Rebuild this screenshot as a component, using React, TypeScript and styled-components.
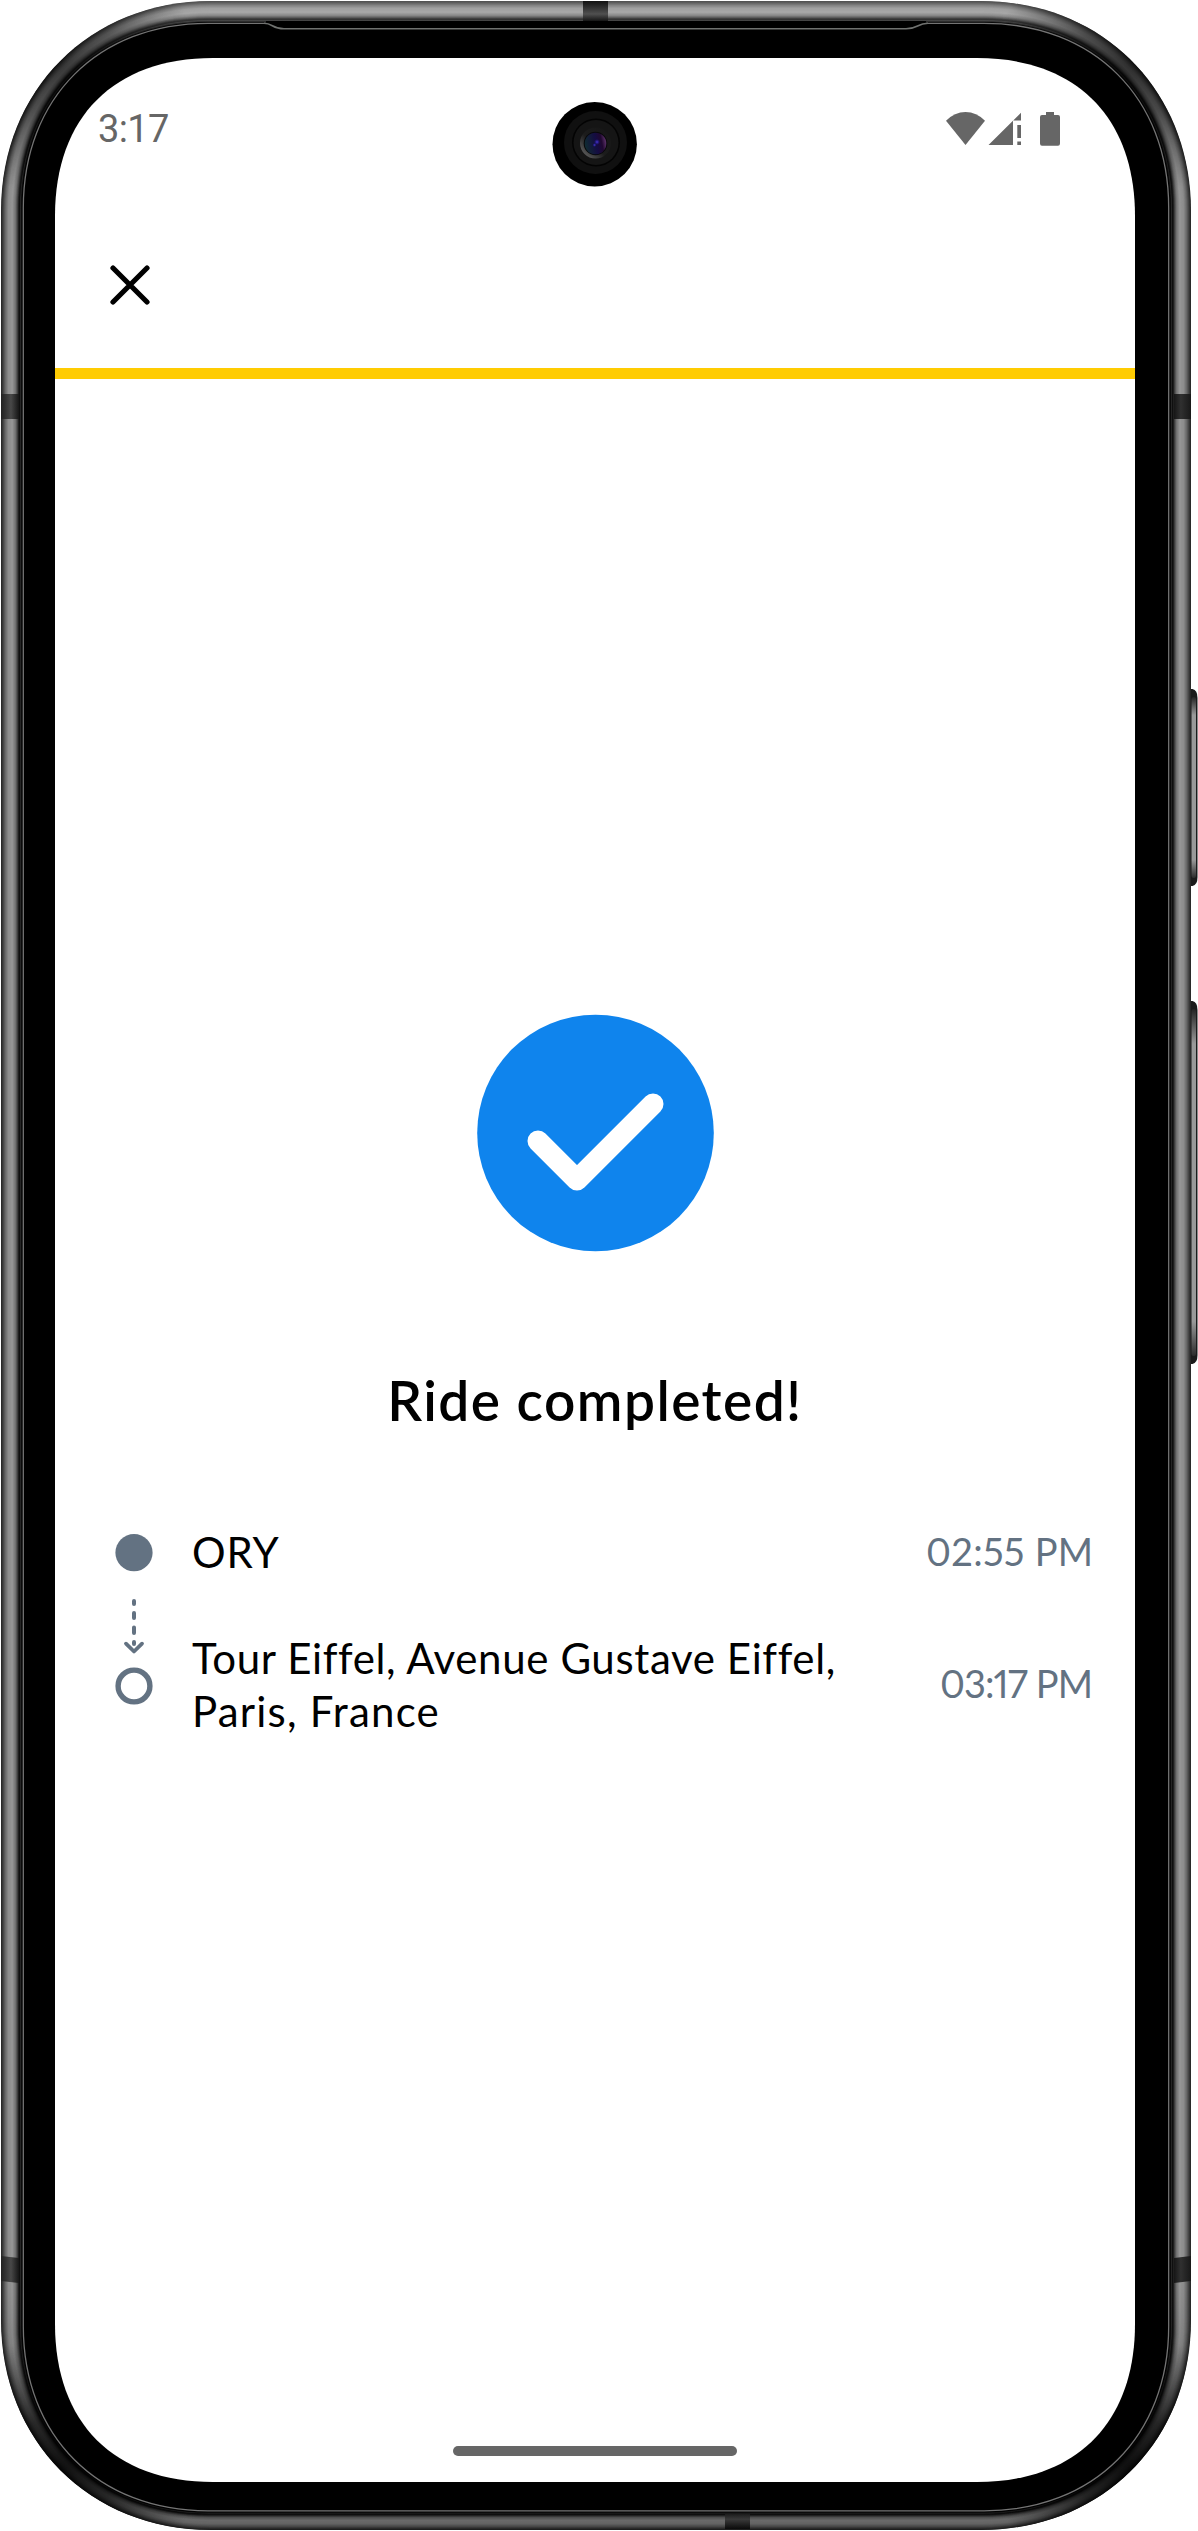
import React from "react";
import styled, { createGlobalStyle } from "styled-components";

const GlobalStyle = createGlobalStyle`
  * { box-sizing: border-box; }
  html, body { margin: 0; padding: 0; background: #fff; }
  body { overflow: hidden; }
`;

const Device = styled.main`
  position: relative;
  width: 1198px;
  height: 2531px;
  padding: 58px 63px 49px 55px;
  overflow: hidden;
  background: #fff;
`;

const Frame = styled.svg`
  position: absolute;
  inset: 0;
  pointer-events: none;
`;

const Screen = styled.section`
  display: flex;
  flex-direction: column;
  width: 1080px;
  height: 2424px;
  background: #fff;
`;

const StatusBar = styled.header`
  display: flex;
  justify-content: space-between;
  height: 140px;
  padding: 49px 75px 0 43px;
`;

const Clock = styled.time`
  font: 400 38px/44px Roboto, sans-serif;
  letter-spacing: -0.6px;
  color: #666;
`;

const StatusIcons = styled.svg`
  display: block;
  margin-top: 4px;
`;

const Toolbar = styled.nav`
  display: flex;
  height: 170px;
  padding: 67px 0 0 55px;
`;

const CloseButton = styled.button`
  display: block;
  width: 40px;
  height: 40px;
  padding: 0;
  border: 0;
  background: none;
  svg { display: block; }
`;

const Progress = styled.div`
  flex: none;
  height: 10.5px;
  background: #ffcc02;
`;

const Content = styled.div`
  display: flex;
  flex: 1;
  flex-direction: column;
  align-items: center;
  padding-top: 635px;
`;

const Badge = styled.svg`
  display: block;
  flex: none;
`;

const Title = styled.h1`
  margin: 113px 0 0;
  font: 600 55px/70px Lato, sans-serif;
  letter-spacing: 1.45px;
  white-space: nowrap;
  color: #000;
`;

const Route = styled.div`
  display: grid;
  grid-template-columns: 38px 1fr auto;
  column-gap: 39px;
  width: 100%;
  margin-top: 91px;
  padding: 0 42px 0 60px;
`;

const RouteTrack = styled.svg`
  display: block;
  grid-row: 1 / span 2;
  margin-top: 1px;
`;

const Place = styled.div<{ $tall?: boolean }>`
  grid-column: 2;
  height: ${(p) => (p.$tall ? 106 : 53)}px;
  margin-top: ${(p) => (p.$tall ? 53 : 0)}px;
  font: 400 42px/53px Lato, sans-serif;
  color: #000;
`;

const Line = styled.span<{ $spacing: number }>`
  display: block;
  white-space: nowrap;
  letter-spacing: ${(p) => p.$spacing}px;
`;

const Time = styled.time<{ $last?: boolean; $spacing: number }>`
  grid-column: 3;
  justify-self: end;
  margin-top: ${(p) => (p.$last ? 78 : -1)}px;
  font: 400 38px/53px Lato, sans-serif;
  font-variant-numeric: proportional-nums;
  letter-spacing: ${(p) => p.$spacing}px;
  margin-right: ${(p) => -p.$spacing}px;
  color: #637282;
  white-space: nowrap;
`;

const HomeBar = styled.div`
  flex: none;
  align-self: center;
  width: 284px;
  height: 10px;
  margin-bottom: 26px;
  border-radius: 5px;
  background: #666;
`;

/* A rounded outline with softened corners: e is the corner extent, c the handle offset. */
function outline(l: number, t: number, r: number, b: number, e: number, c: number) {
  return `M${l} ${t + e}C${l} ${t + c} ${l + c} ${t} ${l + e} ${t}H${r - e}C${r - c} ${t} ${r} ${t + c} ${r} ${t + e}V${b - e}C${r} ${b - c} ${r - c} ${b} ${r - e} ${b}H${l + e}C${l + c} ${b} ${l} ${b - c} ${l} ${b - e}Z`;
}

function ringPath(d: number) {
  return outline(1 + d, 1 + d, 1191 - d, 2530 - d * 0.86, 210 - d * 1.14, 89 - d * 0.64);
}

const PROFILE: [number, number][] = [
  [0, 38], [1.5, 58], [4, 102], [7, 140], [11, 150], [14, 118], [16, 70], [17.5, 24], [18.5, 12], [19.2, 50], [20, 14], [21, 0],
];

function tone(d: number) {
  for (let i = 1; i < PROFILE.length; i++) {
    const [d1, v1] = PROFILE[i];
    const [d0, v0] = PROFILE[i - 1];
    if (d <= d1) return Math.round(v0 + ((v1 - v0) * (d - d0)) / (d1 - d0));
  }
  return 0;
}

const RINGS = Array.from({ length: 43 }, (_, i) => i * 0.5);
const SCREEN_HOLE = outline(55, 58, 1135, 2482, 158, 59);

const CORNERS = [
  { id: "tl", x: 60, y: 62, o: 0.62 },
  { id: "tr", x: 1132, y: 62, o: 0.68 },
  { id: "bl", x: 60, y: 2470, o: 0.85 },
  { id: "br", x: 1132, y: 2470, o: 0.88 },
];

function SideButton({ y, height }: { y: number; height: number }) {
  return (
    <g>
      <path d={`M1190 ${y}h2.500q5 1 5 9v${height - 18}q0 8-5 9h-2.500z`} fill="#1b1b1b" />
      <rect x="1191.500" y={y + 8} width="4.500" height={height - 16} rx="2" fill="url(#key)" />
    </g>
  );
}

function PhoneFrame() {
  return (
    <Frame width="1198" height="2531" viewBox="0 0 1198 2531">
      <defs>
        <linearGradient id="key" x1="0" x2="0" y1="0" y2="1">
          <stop offset="0" stopColor="#242424" />
          <stop offset="0.100" stopColor="#999" />
          <stop offset="0.900" stopColor="#999" />
          <stop offset="1" stopColor="#2c2c2c" />
        </linearGradient>
        <linearGradient id="lower" x1="0" x2="0" y1="0" y2="1">
          <stop offset="0" stopColor="#fff" stopOpacity="0.200" />
          <stop offset="0.030" stopColor="#fff" stopOpacity="0" />
          <stop offset="0.900" stopColor="#000" stopOpacity="0" />
          <stop offset="0.960" stopColor="#000" stopOpacity="0.250" />
          <stop offset="1" stopColor="#000" stopOpacity="0.300" />
        </linearGradient>
        <linearGradient id="bandTop" x1="0" x2="0" y1="0" y2="1">
          <stop offset="0" stopColor="#111" />
          <stop offset="0.650" stopColor="#505050" />
          <stop offset="1" stopColor="#151515" />
        </linearGradient>
        <linearGradient id="bandBottom" x1="0" x2="0" y1="0" y2="1">
          <stop offset="0" stopColor="#1c1c1c" />
          <stop offset="0.350" stopColor="#3a3a3a" />
          <stop offset="1" stopColor="#0a0a0a" />
        </linearGradient>
        <linearGradient id="bandLeft">
          <stop offset="0" stopColor="#202020" />
          <stop offset="0.550" stopColor="#484848" />
          <stop offset="1" stopColor="#151515" />
        </linearGradient>
        <linearGradient id="bandRight">
          <stop offset="0" stopColor="#161616" />
          <stop offset="0.400" stopColor="#303030" />
          <stop offset="1" stopColor="#181818" />
        </linearGradient>
        {CORNERS.map((k) => (
          <radialGradient key={k.id} id={k.id} gradientUnits="userSpaceOnUse" cx={k.x} cy={k.y} r="135">
            <stop offset="0" stopColor="#000" stopOpacity={k.o} />
            <stop offset="0.400" stopColor="#000" stopOpacity={k.o * 0.75} />
            <stop offset="1" stopColor="#000" stopOpacity="0" />
          </radialGradient>
        ))}
        <clipPath id="body">
          <path d={ringPath(0)} />
        </clipPath>
        <mask id="glass" maskUnits="userSpaceOnUse" x="0" y="0" width="1198" height="2531">
          <rect width="1198" height="2531" fill="#fff" />
          <path d={SCREEN_HOLE} fill="#000" />
        </mask>
      </defs>
      <SideButton y={689} height={197} />
      <SideButton y={1001} height={363} />
      <g mask="url(#glass)">
        {RINGS.map((d) => {
          const v = tone(d);
          return <path key={d} d={ringPath(d)} fill={`rgb(${v},${v},${v})`} />;
        })}
        <g clipPath="url(#body)">
          <rect width="1198" height="2531" fill="url(#lower)" />
          {CORNERS.map((k) => (
            <circle key={k.id} cx={k.x} cy={k.y} r="135" fill={`url(#${k.id})`} />
          ))}
        </g>
        <rect x="583" y="1" width="25" height="20" fill="url(#bandTop)" />
        <rect x="725" y="2514" width="25" height="15" fill="url(#bandBottom)" />
        <rect x="1" y="394" width="18" height="25" fill="url(#bandLeft)" />
        <rect x="1174" y="394" width="17" height="25" fill="url(#bandRight)" />
        <path d="M1 2256l18 2v25l-18-2z" fill="url(#bandLeft)" />
        <path d="M1174 2258l17-2v25l-17 2z" fill="url(#bandRight)" />
        <path d={ringPath(21)} fill="#000" />
        <path d={ringPath(22.3)} fill="none" stroke="#747474" strokeWidth="1.300" />
        <path d="M266 21H926V27H266Z" fill="#000" />
        <path
          d="M264 23.300C273 23.300 272 28.800 284 28.800H906C918 28.800 917 23.300 928 23.300"
          fill="none"
          stroke="#707270"
          strokeWidth="1.600"
        />
      </g>
      <Camera />
    </Frame>
  );
}

function Camera() {
  return (
    <g>
      <defs>
        <linearGradient id="lensRim" x1="1" y1="0" x2="0" y2="1">
          <stop offset="0" stopColor="#151515" />
          <stop offset="0.550" stopColor="#1c1c1c" />
          <stop offset="1" stopColor="#727272" />
        </linearGradient>
        <linearGradient id="lens" x1="0" y1="0.400" x2="1" y2="0.200">
          <stop offset="0" stopColor="#102a32" />
          <stop offset="0.500" stopColor="#140c42" />
          <stop offset="0.750" stopColor="#200830" />
          <stop offset="1" stopColor="#6c3c78" />
        </linearGradient>
        <radialGradient id="glint">
          <stop offset="0" stopColor="#4a38d8" />
          <stop offset="1" stopColor="#2018a0" stopOpacity="0" />
        </radialGradient>
      </defs>
      <circle cx="594.700" cy="144.200" r="42.200" fill="#000" />
      <circle cx="595.500" cy="142.500" r="31.500" fill="#101010" />
      <circle cx="596" cy="142.500" r="24" fill="#030303" />
      <circle cx="596" cy="142.500" r="22.500" fill="#151515" />
      <circle cx="595.500" cy="143" r="15.500" fill="url(#lensRim)" />
      <circle cx="595.500" cy="143.500" r="11.800" fill="#070709" />
      <circle cx="595.500" cy="143.500" r="10.800" fill="url(#lens)" />
      <circle cx="597" cy="142" r="3" fill="url(#glint)" />
      <circle cx="594.500" cy="145" r="2" fill="url(#glint)" />
    </g>
  );
}

export default function App() {
  return (
    <>
      <GlobalStyle />
      <Device>
        <Screen>
          <StatusBar>
            <Clock>3:17</Clock>
            <StatusIcons width="115" height="36" viewBox="945 111 115 36" fill="#666">
              <path d="M965.500 145L946 120.800Q954.500 112 965.500 112T985 120.800Z" />
              <path d="M988.500 145L1021 112.700V120.500H1013V145Z" />
              <path d="M1017.300 125H1021V138H1017.300ZM1017.300 141.500H1021V145H1017.300Z" />
              <path d="M1046 112H1054V115H1058Q1060 115 1060 117V143.500Q1060 145.700 1058 145.700H1042Q1040 145.700 1040 143.500V117Q1040 115 1042 115H1046Z" />
            </StatusIcons>
          </StatusBar>
          <Toolbar>
            <CloseButton aria-label="Close">
              <svg width="40" height="40" viewBox="110 265 40 40">
                <path d="M113 268L147 302M147 268L113 302" stroke="#000" strokeWidth="5.200" strokeLinecap="round" />
              </svg>
            </CloseButton>
          </Toolbar>
          <Progress />
          <Content>
            <Badge width="238" height="238" viewBox="-0.500 0 238 238">
              <circle cx="119" cy="119" r="118.300" fill="#0f84ed" />
              <path
                d="M61.500 127L100.500 166L176.500 90"
                fill="none"
                stroke="#fff"
                strokeWidth="21"
                strokeLinecap="round"
                strokeLinejoin="round"
              />
            </Badge>
            <Title>Ride completed!</Title>
            <Route>
              <RouteTrack width="38" height="211" viewBox="115 1527 38 211">
                <circle cx="134" cy="1552.700" r="18.600" fill="#637282" />
                <path
                  d="M134 1601V1604M134 1613V1618M134 1627.500V1633M134 1642V1644"
                  stroke="#637282"
                  strokeWidth="4"
                  strokeLinecap="round"
                />
                <path
                  d="M126 1643.700L134 1651.500L142 1643.700"
                  fill="none"
                  stroke="#637282"
                  strokeWidth="3.800"
                  strokeLinecap="round"
                  strokeLinejoin="round"
                />
                <circle cx="134" cy="1686" r="15.900" fill="none" stroke="#637282" strokeWidth="5.400" />
              </RouteTrack>
              <Place>
                <Line $spacing={0.9}>ORY</Line>
              </Place>
              <Time $spacing={0.25}>02:55 PM</Time>
              <Place $tall>
                <Line $spacing={0.63}>Tour Eiffel, Avenue Gustave Eiffel,</Line>
                <Line $spacing={1.2}>Paris, France</Line>
              </Place>
              <Time $last $spacing={-0.9}>03:17 PM</Time>
            </Route>
          </Content>
          <HomeBar />
        </Screen>
        <PhoneFrame />
      </Device>
    </>
  );
}
